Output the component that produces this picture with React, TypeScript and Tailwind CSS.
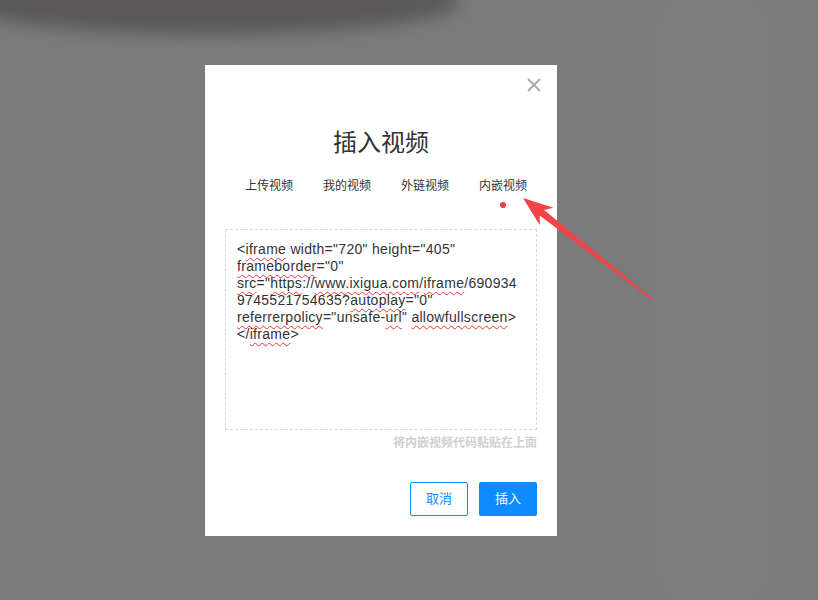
import { useState } from 'react'

const tabs = ['上传视频', '我的视频', '外链视频', '内嵌视频']

const cjk = { fontFamily: '"Noto Sans", "Noto Sans CJK SC", sans-serif' }
const code = { fontFamily: '"Liberation Sans", "Noto Sans CJK SC", sans-serif' }

function Typo({ children }: { children: string }) {
  return (
    <span className="underline decoration-wavy decoration-[#e53935] decoration-1 underline-offset-[3px]">
      {children}
    </span>
  )
}

export default function App() {
  const [active, setActive] = useState(3)

  return (
    <div
      className="relative h-[600px] w-[818px] overflow-hidden bg-[#7b7b7b] pl-[205px] pt-[65px]"
      style={cjk}
    >
      {/* backdrop smudges */}
      <div className="pointer-events-none absolute -top-[30px] left-[-40px] h-[64px] w-[500px] rounded-[50%] bg-[#5a5858] blur-[8px]" />
      <div className="pointer-events-none absolute right-[60px] top-0 h-[600px] w-[90px] bg-[#7f7f7f] blur-[20px]" />

      <div className="relative flex h-[471px] w-[352px] flex-col bg-white px-[20px]">
        <button className="absolute right-[16px] top-[13px] text-[#a8a8a8]">
          <svg width="14" height="14" viewBox="0 0 14 14" fill="none" stroke="currentColor" strokeWidth="1.8">
            <path d="M1 1 L13 13 M13 1 L1 13" />
          </svg>
        </button>

        <h1 className="mt-[61px] text-center text-[24px] leading-[32px] font-normal text-[#333]">插入视频</h1>

        <div className="mt-[18px] flex gap-[30px] pl-[20px]">
          {tabs.map((t, i) => (
            <button key={t} onClick={() => setActive(i)} className="flex w-[48px] flex-col items-center">
              <span className="text-[12px] leading-[20px] whitespace-nowrap text-[#333]">{t}</span>
              <span
                className={`mt-[6px] h-[6px] w-[6px] rounded-full ${active === i ? 'bg-[#f03c3c]' : 'bg-transparent'}`}
              />
            </button>
          ))}
        </div>

        <div
          className="mt-[21px] h-[201px] border border-dashed border-[#d8d8d8] px-[11px] pt-[11px] text-[14px] leading-[17px] tracking-[0.3px] text-[#333]"
          style={code}
        >
          <div>
            &lt;<Typo>iframe</Typo> width="720" height="405"
          </div>
          <div>
            <Typo>frameborder</Typo>="0"
          </div>
          <div>
            <Typo>src</Typo>="<Typo>https</Typo>://<Typo>www.ixigua.com</Typo>/<Typo>iframe</Typo>/690934
          </div>
          <div>
            9745521754635?<Typo>autoplay</Typo>="0"
          </div>
          <div>
            <Typo>referrerpolicy</Typo>="unsafe-<Typo>url</Typo>" <Typo>allowfullscreen</Typo>&gt;
          </div>
          <div>
            &lt;/<Typo>iframe</Typo>&gt;
          </div>
        </div>

        <p className="mt-[5px] text-right text-[12px] leading-[16px] font-bold text-[#d0d0d0]">将内嵌视频代码粘贴在上面</p>

        <div className="mt-[31px] flex justify-end gap-[11px]">
          <button className="h-[34px] w-[58px] rounded-[2px] border border-[#0d8bff] text-[13px] text-[#0d8bff]">取消</button>
          <button className="h-[34px] w-[58px] rounded-[2px] bg-[#0d8bff] text-[13px] text-white">插入</button>
        </div>
      </div>

      {/* annotation arrow */}
      <svg className="pointer-events-none absolute left-0 top-0" width="818" height="600">
        <polygon
          points="523,198 553.4,207.8 544.1,210 653.5,299.6 652.5,300.4 539.7,215.6 539.8,225.2"
          fill="#f24444"
        />
      </svg>
    </div>
  )
}
